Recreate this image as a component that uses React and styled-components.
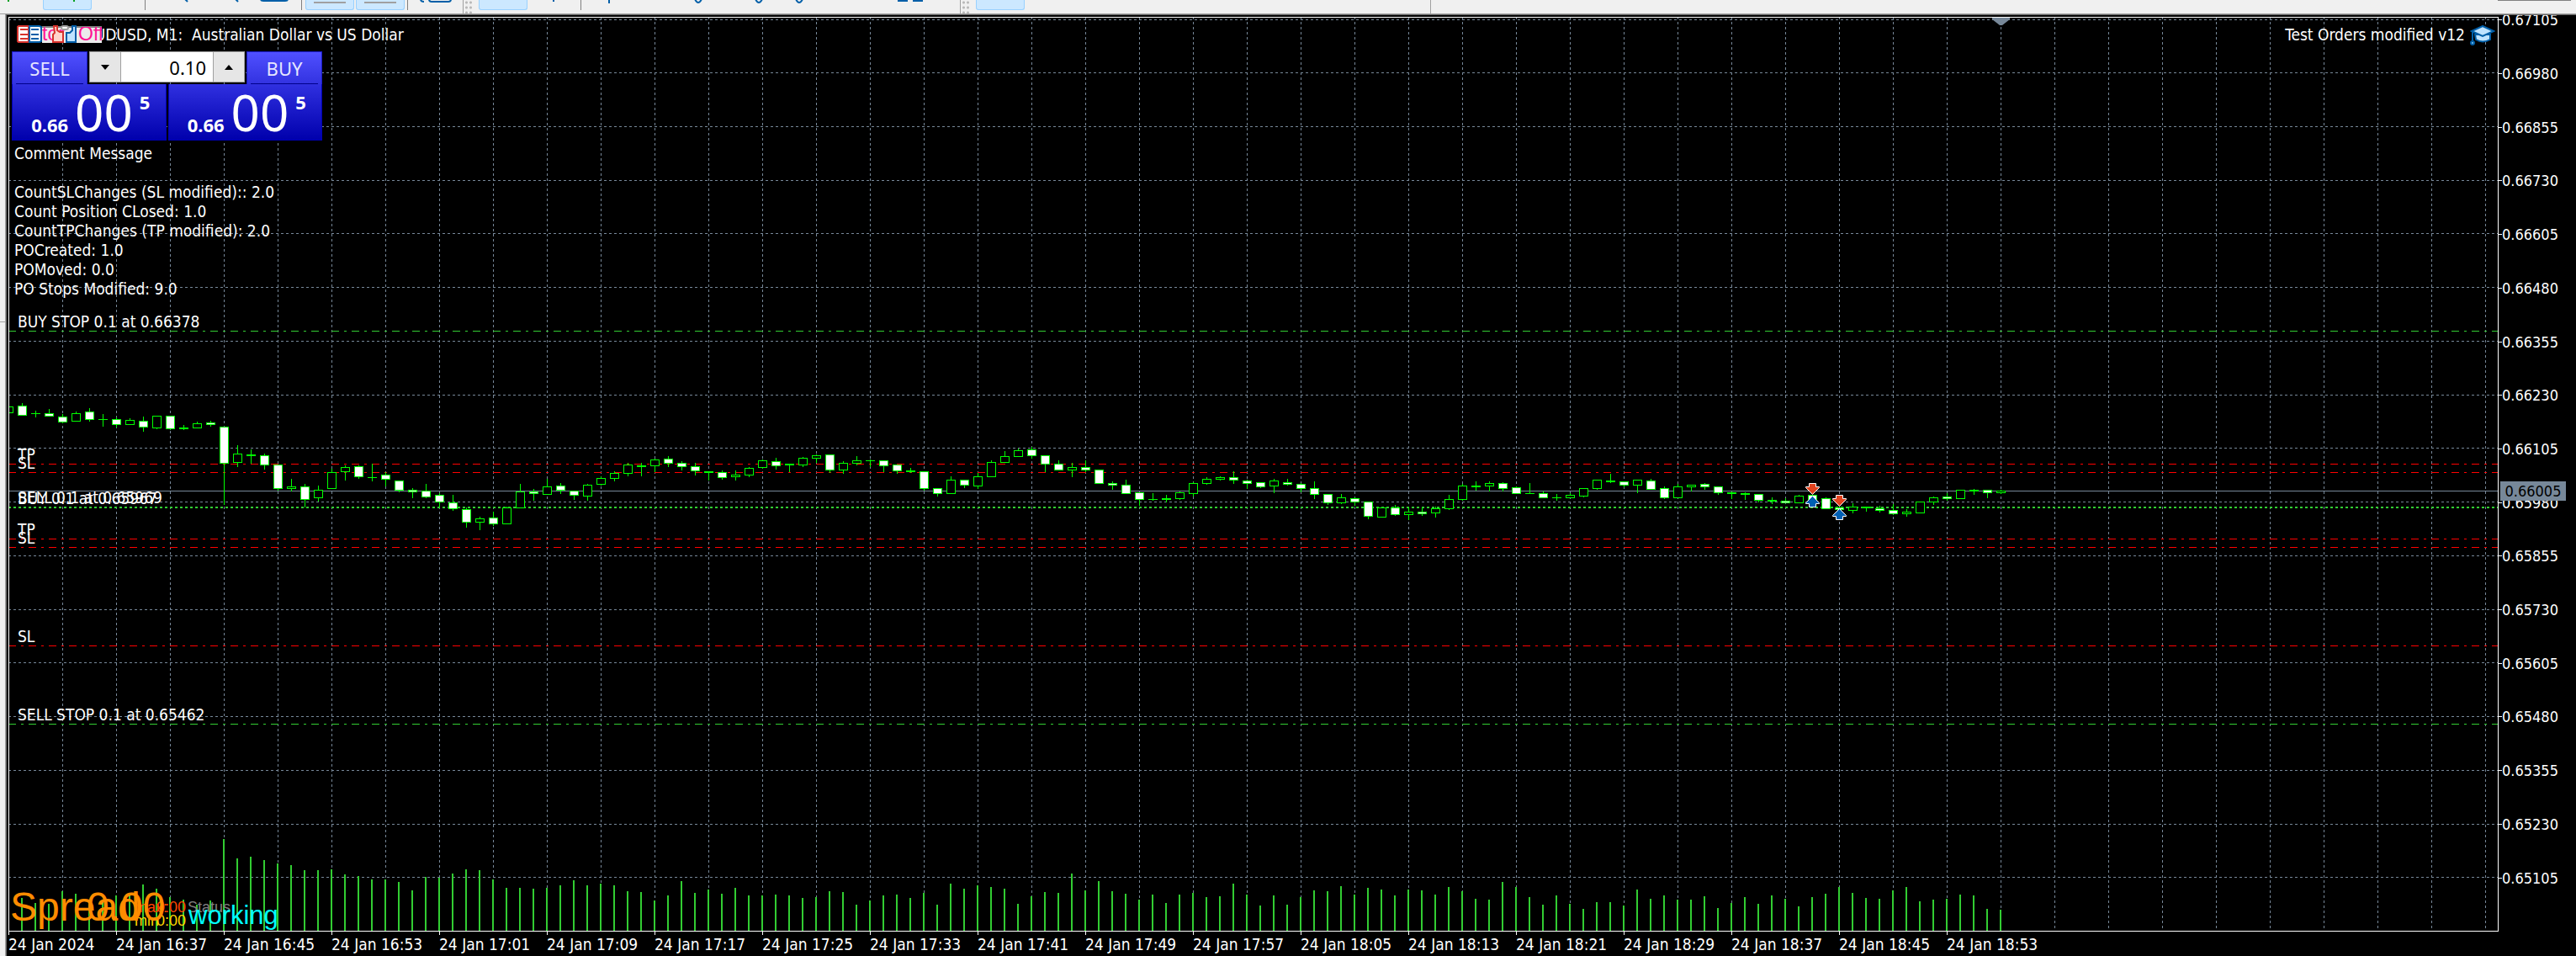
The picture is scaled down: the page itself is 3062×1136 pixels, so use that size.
import React from "react";
import styled, { createGlobalStyle } from "styled-components";

const GlobalStyle = createGlobalStyle`
  * {
    box-sizing: border-box;
  }
  body {
    margin: 0;
    background: #000;
    color: #fff;
    font-family: "DejaVu Sans Condensed", "DejaVu Sans", sans-serif;
    font-size: 19px;
  }
`;

const Window = styled.div`
  display: flex;
  flex-direction: column;
  min-height: 100vh;
  overflow: hidden;
`;

const Toolbar = styled.div`
  display: flex;
  gap: 2px;
  height: 16px;
  padding-right: 6px;
  background: #f0f0f0;
  overflow: hidden;
`;

const ToolButton = styled.button`
  flex: none;
  width: 58px;
  height: 12px;
  padding: 0;
  border: 1px solid ${(props) => (props.$active ? "#99d1ff" : "transparent")};
  border-top: 0;
  border-radius: 0 0 3px 3px;
  background: ${(props) => (props.$active ? "#cce8ff" : "transparent")};
  line-height: 0;

  &:first-child {
    margin-left: -9px;
  }
`;

const Separator = styled.span`
  flex: none;
  width: 4px;
  height: 12px;
  background: linear-gradient(#808080, #808080) 1px 0 / 1px 100% no-repeat;
`;

const Grip = styled.span`
  flex: none;
  width: 18px;
  margin-left: ${(props) => props.$space || 0}px;
  background:
    linear-gradient(#a0a0a0, #a0a0a0) 1px 0 / 1px 100% no-repeat,
    radial-gradient(circle, #b8b8b8 1px, transparent 2px) 3px 0 / 5px 6px
      repeat-y,
    radial-gradient(circle, #b8b8b8 1px, transparent 2px) 8px 0 / 5px 6px
      repeat-y;
`;

const Edge = styled.span`
  width: 1px;
  margin-left: 480px;
  background: #a0a0a0;
`;

const BarEnd = styled.span`
  width: 87px;
  height: 1px;
  margin-left: auto;
  background: #808080;
`;

const Body = styled.div`
  display: flex;
  flex: 1;
`;

const Dock = styled.aside`
  flex: none;
  width: 6px;
  border-top: 1px solid #a0a0a0;
  background: linear-gradient(#a0a0a0, #a0a0a0) 0 365px / 100% 1px no-repeat
    #f0f0f0;
`;

const ChartWindow = styled.main`
  display: flex;
  flex: 1;
  min-width: 0;
  border-top: 1px solid #a0a0a0;
  border-left: 1px solid #a0a0a0;
`;

const ChartInner = styled.div`
  display: flex;
  flex: 1;
  min-width: 0;
  border-top: 1px solid #696969;
  border-left: 1px solid #696969;
  background: #000;
`;

const ChartColumn = styled.div`
  display: flex;
  flex: 1;
  flex-direction: column;
  min-width: 0;
  padding: 2px 0 0 2px;
`;

const Plot = styled.div`
  display: grid;
  flex: 1;
  min-height: 0;
  border: 1px solid #fff;
  overflow: hidden;

  & > * {
    grid-area: 1 / 1;
  }
`;

const Canvas = styled.svg`
  width: 100%;
  height: 100%;
  min-height: 1085px;
`;

const Overlay = styled.div`
  z-index: 1;
  padding: 9px 3px 0;
`;

const Header = styled.header`
  display: flex;
  justify-content: space-between;
  height: 24px;
  margin-bottom: 7px;
  line-height: 23px;
`;

const HeaderSide = styled.div`
  display: flex;
  align-items: flex-start;
  gap: ${(props) => props.$gap || 0}px;
  padding-left: 6px;
  white-space: pre;
`;

const HeaderIcons = styled.svg`
  z-index: 1;
  margin-right: -20px;
`;

const TradePanel = styled.section`
  display: grid;
  grid-template-columns: 90px 1fr 90px;
  width: 369px;
  row-gap: 0;
`;

const SideButton = styled.button`
  height: 39px;
  padding: 0 4px;
  border: 1px solid #1a1ac8;
  border-bottom: 0;
  background: linear-gradient(#5050ff, #3232e0);
  color: #e6e6ff;
  font-family: "Noto Sans", sans-serif;
  font-size: 22px;
  line-height: 36px;

  span {
    display: block;
    border-bottom: 1px solid #00008b;
    box-shadow: 0 1px #8080ff;
  }
`;

const Volume = styled.div`
  display: grid;
  grid-template-columns: 36px 1fr 36px;
  height: 37px;
  margin: 0 2px;
  border: 1px solid #a0a0a0;
  background: #a0a0a0;
  column-gap: 1px;
`;

const Step = styled.button`
  padding: 0;
  border: 0;
  background: #e6e6e6;
  line-height: 0;
`;

const VolumeInput = styled.input`
  min-width: 0;
  padding: 0 8px;
  border: 0;
  background: #fff;
  color: #000;
  font-family: "Noto Sans", sans-serif;
  font-size: 22px;
  text-align: right;
`;

const Quotes = styled.div`
  display: grid;
  grid-column: 1 / -1;
  grid-template-columns: 1fr 1fr;
  column-gap: 2px;
`;

const Quote = styled.button`
  display: flex;
  justify-content: center;
  gap: 8px;
  height: 67px;
  padding: 0 0 0 4px;
  border: 1px solid #0000b4;
  border-top: 0;
  background: linear-gradient(#3030e0, #0000ac);
  color: #fff;
  font-family: "Noto Sans", sans-serif;
  font-size: 22px;
  font-weight: 700;
  line-height: 30px;
`;

const Whole = styled.span`
  align-self: flex-end;
  padding-bottom: 3px;
`;

const Pips = styled.span`
  font-size: 60px;
  font-weight: 400;
  line-height: 67px;
`;

const Fraction = styled.span`
  padding-top: 6px;
`;

const Comment = styled.div`
  padding: 4px 3px;
  line-height: 23px;
  white-space: pre-line;
`;

const TimeAxis = styled.ul`
  display: flex;
  height: 29px;
  margin: 0;
  padding: 0;
  list-style: none;
`;

const TimeLabel = styled.li`
  flex: none;
  width: 128px;
  line-height: 30px;
  white-space: nowrap;
  background: linear-gradient(#fff, #fff) 0 0 / 1px 4px no-repeat;
`;

const PriceAxis = styled.div`
  position: relative;
  display: flex;
  flex: none;
  width: 92px;
  overflow: hidden;
  font-size: 18px;
`;

const PriceList = styled.ul`
  display: flex;
  flex: 1;
  flex-direction: column;
  margin: -26px 0 61px;
  padding: 0;
  list-style: none;
`;

const PriceLabel = styled.li`
  display: flex;
  flex: 1;
  align-items: center;

  &::before {
    content: "";
    width: 4px;
    height: 1px;
    background: #fff;
  }
`;

const PriceTag = styled.output`
  position: absolute;
  top: 554px;
  left: 2px;
  width: 78px;
  background: #778899;
  color: #000;
  line-height: 23px;
  text-align: center;
`;

const FIRST_X = 10;
const STEP = 16;
const BASE_Y = 480;
const BOTTOM = 1106;

// high, body top, body bottom, low (px below BASE_Y), 1 = bearish
const CANDLES = [
  [3, 3, 11, 11, 0], [-1, 2, 14, 14, 1], [8, 11, 12, 16, 0], [6, 11, 15, 15, 1],
  [12, 15, 22, 23, 1], [9, 11, 21, 21, 0], [5, 9, 19, 21, 1], [12, 18, 19, 27, 0],
  [16, 18, 25, 28, 1], [17, 19, 25, 25, 0], [15, 20, 28, 33, 1], [14, 14, 29, 30, 0],
  [14, 14, 30, 31, 1], [25, 28, 30, 31, 0], [21, 23, 29, 29, 0], [20, 22, 25, 27, 1],
  [27, 27, 71, 120, 1], [49, 59, 70, 75, 0], [54, 60, 62, 71, 0], [59, 61, 73, 78, 1],
  [72, 72, 101, 103, 1], [89, 98, 101, 104, 0], [95, 98, 114, 123, 1], [97, 102, 112, 116, 0],
  [77, 81, 101, 101, 0], [73, 75, 81, 91, 0], [73, 74, 87, 89, 1], [71, 87, 88, 92, 0],
  [81, 84, 90, 98, 1], [91, 91, 103, 105, 1], [100, 102, 105, 112, 1], [95, 103, 111, 112, 1],
  [106, 108, 117, 123, 1], [108, 117, 125, 127, 1], [123, 125, 141, 147, 1], [134, 136, 141, 150, 0],
  [128, 135, 143, 145, 1], [122, 123, 143, 143, 0], [95, 104, 124, 124, 0], [101, 104, 107, 115, 1],
  [89, 98, 108, 108, 0], [94, 97, 103, 107, 1], [103, 103, 109, 114, 1], [95, 96, 110, 115, 0],
  [86, 88, 96, 97, 0], [80, 82, 89, 92, 0], [70, 72, 83, 86, 0], [70, 73, 75, 86, 0],
  [65, 66, 74, 81, 0], [62, 65, 71, 75, 1], [68, 70, 75, 79, 1], [70, 74, 80, 85, 1],
  [80, 80, 82, 91, 0], [79, 81, 88, 90, 1], [79, 84, 87, 91, 0], [75, 76, 85, 87, 0],
  [66, 67, 76, 77, 0], [64, 68, 74, 78, 1], [71, 71, 73, 81, 0], [63, 64, 73, 75, 0],
  [60, 61, 65, 70, 0], [60, 60, 79, 82, 1], [68, 70, 79, 83, 0], [62, 67, 71, 73, 0],
  [66, 67, 68, 75, 0], [67, 67, 74, 81, 1], [72, 72, 80, 83, 1], [76, 79, 81, 82, 0],
  [80, 80, 101, 103, 1], [100, 100, 107, 110, 1], [86, 90, 107, 107, 0], [90, 90, 97, 100, 1],
  [82, 86, 98, 101, 0], [67, 69, 87, 87, 0], [56, 62, 70, 70, 0], [53, 55, 63, 63, 0],
  [51, 54, 62, 65, 1], [61, 61, 72, 81, 1], [67, 71, 79, 79, 1], [70, 75, 79, 87, 0],
  [67, 75, 79, 81, 1], [78, 78, 95, 95, 1], [92, 94, 97, 102, 1], [90, 96, 107, 107, 1],
  [105, 105, 114, 121, 1], [106, 113, 114, 115, 0], [108, 112, 114, 117, 0], [104, 105, 113, 114, 0],
  [93, 94, 107, 110, 0], [87, 89, 95, 96, 0], [86, 87, 90, 91, 0], [80, 87, 91, 95, 1],
  [90, 91, 95, 101, 1], [93, 93, 99, 100, 1], [89, 91, 98, 106, 0], [89, 93, 96, 97, 1],
  [94, 95, 101, 105, 1], [92, 100, 108, 113, 1], [107, 107, 118, 120, 1], [107, 111, 118, 119, 0],
  [111, 112, 117, 121, 1], [116, 116, 134, 137, 1], [123, 123, 135, 135, 0], [120, 123, 132, 133, 1],
  [123, 128, 132, 138, 0], [123, 128, 131, 133, 1], [122, 124, 130, 135, 0], [108, 113, 125, 126, 0],
  [95, 97, 114, 115, 0], [92, 97, 99, 103, 0], [92, 94, 98, 104, 0], [93, 94, 101, 104, 1],
  [98, 99, 107, 107, 1], [94, 106, 107, 107, 0], [104, 106, 112, 112, 1], [107, 111, 112, 115, 0],
  [106, 108, 112, 112, 0], [100, 100, 110, 111, 0], [90, 90, 101, 102, 0], [83, 91, 93, 94, 0],
  [92, 92, 97, 99, 1], [90, 90, 97, 106, 0], [89, 91, 102, 102, 1], [98, 100, 112, 113, 1],
  [95, 98, 112, 112, 0], [96, 96, 99, 104, 0], [94, 95, 99, 102, 1], [98, 98, 106, 108, 1],
  [104, 105, 107, 113, 0], [105, 106, 108, 114, 0], [107, 107, 115, 117, 1], [111, 114, 116, 119, 0],
  [112, 115, 118, 118, 1], [108, 109, 118, 118, 0], [108, 108, 115, 115, 1], [111, 112, 125, 125, 1],
  [122, 123, 126, 126, 1], [118, 122, 127, 130, 0], [122, 122, 124, 128, 0], [121, 124, 127, 129, 1],
  [119, 126, 131, 132, 1], [125, 128, 131, 134, 0], [116, 116, 130, 130, 0], [110, 111, 117, 120, 0],
  [106, 110, 113, 115, 1], [102, 102, 113, 113, 0], [101, 102, 104, 108, 0], [102, 102, 106, 112, 1],
  [102, 103, 106, 107, 0],
];

const VOLUMES = [
  0, 39, 33, 32, 47, 44, 36, 36, 42, 43, 55, 50, 40, 37, 31, 36, 109, 86, 88, 84,
  80, 78, 72, 72, 73, 67, 65, 61, 61, 58, 48, 64, 63, 68, 73, 72, 61, 51, 51, 50,
  51, 54, 60, 54, 56, 54, 47, 46, 36, 42, 59, 45, 49, 44, 51, 42, 42, 43, 42, 39,
  40, 47, 46, 31, 36, 42, 43, 39, 45, 31, 56, 50, 54, 52, 50, 32, 41, 46, 45, 68,
  48, 59, 47, 44, 37, 43, 33, 43, 45, 40, 41, 56, 43, 30, 42, 31, 40, 48, 47, 53,
  43, 51, 49, 42, 49, 48, 43, 52, 47, 38, 37, 58, 52, 40, 31, 42, 32, 26, 34, 34,
  30, 49, 38, 42, 37, 37, 41, 27, 33, 40, 32, 42, 38, 29, 40, 44, 52, 45, 39, 38,
  48, 52, 35, 37, 38, 43, 42, 26, 25,
];

const GRID_Y = [
  23, 86, 150, 214, 277, 341, 405, 469, 532, 596, 660, 724, 787, 851, 915, 979,
  1042,
];
const GRID_X = Array.from({ length: 46 }, (_, i) => 74 + i * 64);

const PRICES = GRID_Y.map((_, i) => (0.67105 - i * 0.00125).toFixed(5));

const TIMES = [
  "24 Jan 2024", "24 Jan 16:37", "24 Jan 16:45", "24 Jan 16:53", "24 Jan 17:01",
  "24 Jan 17:09", "24 Jan 17:17", "24 Jan 17:25", "24 Jan 17:33", "24 Jan 17:41",
  "24 Jan 17:49", "24 Jan 17:57", "24 Jan 18:05", "24 Jan 18:13", "24 Jan 18:21",
  "24 Jan 18:29", "24 Jan 18:37", "24 Jan 18:45", "24 Jan 18:53",
];

const ORDERS = [
  { y: 393, color: "#32cd32", label: "BUY STOP 0.1 at 0.66378" },
  { y: 551, color: "#ff0000", label: "TP" },
  { y: 561, color: "#ff0000", label: "SL" },
  { y: 602, color: "#32cd32", label: "SELL 0.1 at 0.65969", dash: "3 3" },
  { y: 603, color: "#32cd32", label: "BUY 0.1 at 0.65967", dash: "3 3" },
  { y: 640, color: "#ff0000", label: "TP" },
  { y: 650, color: "#ff0000", label: "SL" },
  { y: 767, color: "#ff0000", label: "SL" },
  { y: 860, color: "#32cd32", label: "SELL STOP 0.1 at 0.65462" },
];

const DEALS = [
  { x: 2146, y: 574, side: "sell" },
  { x: 2146, y: 589, side: "buy" },
  { x: 2178, y: 588, side: "sell" },
  { x: 2178, y: 604, side: "buy" },
];

const COMMENT = `Comment Message

CountSLChanges (SL modified):: 2.0
Count Position CLosed: 1.0
CountTPChanges (TP modified): 2.0
POCreated: 1.0
POMoved: 0.0
PO Stops Modified: 9.0`;

function Candle({ index, data }) {
  const [high, top, bottom, low, bearish] = data;
  const x = FIRST_X + index * STEP;
  const height = bottom - top;
  return (
    <>
      <rect x={x} y={BASE_Y + high} width="1" height={low - high} fill="#0f0" />
      <rect x={x - 5} y={BASE_Y + top} width="11" height={height} fill="#0f0" />
      {height > 2 && (
        <rect
          x={x - 4}
          y={BASE_Y + top + 1}
          width="9"
          height={height - 2}
          fill={bearish ? "#fff" : "#000"}
        />
      )}
    </>
  );
}

function Deal({ x, y, side }) {
  return side === "sell" ? (
    <path
      transform={`translate(${x} ${y})`}
      d="M4.5 .5h8v4h4v1l-8 8-8-8v-1h4z"
      fill="#e2431e"
      stroke="#fff"
    />
  ) : (
    <path
      transform={`translate(${x} ${y})`}
      d="M4.5 13.5h8v-4h4v-1l-8-8-8 8v1h4z"
      fill="#0060b4"
      stroke="#fff"
    />
  );
}

function Chart() {
  return (
    <Canvas role="img" aria-label="AUDUSD M1 candlestick chart">
      <g transform="translate(-11 -21)">
        <g
          transform="translate(0.5 0.5)"
          stroke="#778899"
          shapeRendering="crispEdges"
        >
          {GRID_X.map((x) => (
            <path key={x} d={`M${x} 19.5V1106`} strokeDasharray="3 3" />
          ))}
          {GRID_Y.map((y) => (
            <path key={y} d={`M9.5 ${y}H6000`} strokeDasharray="3 3" />
          ))}
          <path d="M10 583H6000" />
          {ORDERS.map((order) => (
            <path
              key={order.y}
              d={`M9.5 ${order.y}H6000`}
              stroke={order.color}
              strokeDasharray={order.dash || "9 6 3 6"}
            />
          ))}
        </g>
        <path d="M2368 21h21v2l-9 7h-3l-9-7z" fill="#778899" />
        <g shapeRendering="crispEdges">
          {VOLUMES.map((v, i) => (
            <rect
              key={i}
              x={FIRST_X - 1 + i * STEP}
              y={BOTTOM - v}
              width="2"
              height={v}
              fill="#32cd32"
            />
          ))}
          {CANDLES.map((data, i) => (
            <Candle key={i} index={i} data={data} />
          ))}
        </g>
        {DEALS.map((deal) => (
          <Deal key={`${deal.x}-${deal.y}`} {...deal} />
        ))}
        <g fill="#fff">
          {ORDERS.map((order) => (
            <text key={order.y} x="21" y={order.y - 4}>
              {order.label}
            </text>
          ))}
        </g>
        <g fontFamily="Liberation Sans, sans-serif" fontSize="18">
          <text x="223" y="1084" fill="#808080">Status</text>
          <text x="160" y="1084" fill="#ff4500">max:</text>
          <text x="186" y="1084" fill="#ff4500">0:00</text>
          <text x="160" y="1100" fill="#ffd700">min</text>
          <text x="186" y="1100" fill="#ffd700">0:00</text>
          <text x="224" y="1098" fill="#00ffff" fontSize="31">working</text>
          <g fill="#ff8c00" fontSize="48">
            <text x="12" y="1094">Spread</text>
            <text x="103" y="1094">0.00</text>
          </g>
        </g>
      </g>
    </Canvas>
  );
}

function TitleIcons() {
  return (
    <HeaderIcons width="101" height="22" aria-hidden="true">
      <path d="M30 1h71v20H30z" fill="#ececec" />
      <path d="M30 2h71" stroke="#808080" strokeWidth="2" />
      <svg x="30" y="2" width="71" height="17">
        <g
          fill="#ff1493"
          fontFamily="Liberation Sans, sans-serif"
          fontSize="23"
        >
          <text x="0" y="16">tor</text>
          <text x="43" y="16">Off</text>
        </g>
      </svg>
      <path d="M2 1h12v19H2l-1-1V2z" fill="#fff" stroke="#d8322c" strokeWidth="2" />
      <path d="M15 1h12l2 1v17l-2 1H15z" fill="#fff" stroke="#005fa8" strokeWidth="2" />
      <path d="M4 5h9M4 11h9M4 16h9" stroke="#d8322c" strokeWidth="2" />
      <path d="M17 5h9M17 11h9M17 16h9" stroke="#005fa8" strokeWidth="2" />
      <path d="M44 1h4v5l3 2h4v12H43v-9l2-2z" fill="#ffd5cc" stroke="#d8322c" strokeWidth="2" />
      <path d="M66 1h4v19H59v-11h4l3-3z" fill="#bfe3ff" stroke="#005fa8" strokeWidth="2" />
      <rect x="53" y="1" width="8" height="4" rx="2" fill="#fff" stroke="#a0a0a0" strokeWidth="2" />
    </HeaderIcons>
  );
}

function CapIcon() {
  return (
    <svg width="30" height="24" aria-hidden="true">
      <path d="M6 11h18v6q-9 5-17 0z" fill="#bfe3ff" stroke="#005fa8" strokeWidth="2" />
      <path d="M15 1l13 6-13 6L2 7z" fill="#bfe3ff" stroke="#005fa8" strokeWidth="2" />
      <path d="M3 7v11" stroke="#005fa8" strokeWidth="2" />
      <circle cx="3" cy="21" r="2" fill="#7cc4f5" stroke="#005fa8" strokeWidth="2" />
    </svg>
  );
}

function ToolIcon({ d, color = "#005fa8", fill = "none" }) {
  return (
    <svg width="56" height="11" aria-hidden="true">
      <path d={d} stroke={color} strokeWidth="2" fill={fill} />
    </svg>
  );
}

function Tool({ name, active, ...icon }) {
  return (
    <ToolButton type="button" aria-label={name} $active={active}>
      {icon.d && <ToolIcon {...icon} />}
    </ToolButton>
  );
}

function TopBar() {
  return (
    <Toolbar>
      <Tool name="Bar chart" d="M18 0v2" color="#00a020" />
      <Tool name="Candles" active d="M36 0v2" color="#00a020" />
      <Tool name="Line chart" />
      <Separator />
      <Tool name="Zoom in" d="M42 -1l3 3" />
      <Tool name="Zoom out" d="M42 -1l3 3" />
      <Tool name="Tile windows" d="M12 -1q0 2 3 2h26q3 0 3-2z" fill="#005fa8" />
      <Separator />
      <Tool name="Auto scroll" active d="M9 3h38" color="#a0a0a0" />
      <Tool name="Chart shift" active d="M9 3h38" color="#a0a0a0" />
      <Separator />
      <Tool name="Templates" d="M10 -1q0 3 4 3M20 -1q0 3 3 3h20q3 0 3-3" />
      <Grip />
      <Tool name="Cursor" active />
      <Tool name="Crosshair" d="M28 0v2" />
      <Separator />
      <Tool name="Vertical line" d="M28 0v4" />
      <Tool name="Horizontal line" />
      <Tool name="Trendline" d="M10 -1q4 8 8 0" />
      <Tool name="Channel" d="M22 -1q4 8 8 0" />
      <Tool name="Fibonacci" d="M10 -1q4 8 8 0" />
      <Tool name="Text" />
      <Tool name="Shapes" d="M12 0v1h10v-1M30 0v1h10v-1" fill="#005fa8" />
      <Grip $space={25} />
      <Tool name="M1" active />
      <Edge />
      <BarEnd />
    </Toolbar>
  );
}

function Price({ label }) {
  return (
    <Quote type="button" aria-label={label}>
      <Whole>0.66</Whole>
      <Pips>00</Pips>
      <Fraction>5</Fraction>
    </Quote>
  );
}

function OneClickTrading() {
  return (
    <TradePanel>
      <SideButton type="button">
        <span>SELL</span>
      </SideButton>
      <Volume>
        <Step type="button" aria-label="Decrease volume">
          <svg width="10" height="6">
            <path d="M0 0h10L5 6z" />
          </svg>
        </Step>
        <VolumeInput aria-label="Volume" defaultValue="0.10" />
        <Step type="button" aria-label="Increase volume">
          <svg width="10" height="6">
            <path d="M0 6h10L5 0z" />
          </svg>
        </Step>
      </Volume>
      <SideButton type="button">
        <span>BUY</span>
      </SideButton>
      <Quotes>
        <Price label="Sell at 0.66005" />
        <Price label="Buy at 0.66005" />
      </Quotes>
    </TradePanel>
  );
}

function App() {
  return (
    <Window>
      <GlobalStyle />
      <TopBar />
      <Body>
        <Dock />
        <ChartWindow>
          <ChartInner>
            <ChartColumn>
              <Plot>
                <Chart />
                <Overlay>
                  <Header>
                    <HeaderSide>
                      <TitleIcons />
                      <span>AUDUSD, M1:  Australian Dollar vs US Dollar</span>
                    </HeaderSide>
                    <HeaderSide $gap={6}>
                      <span>Test Orders modified v12</span>
                      <CapIcon />
                    </HeaderSide>
                  </Header>
                  <OneClickTrading />
                  <Comment>{COMMENT}</Comment>
                </Overlay>
              </Plot>
              <TimeAxis>
                {TIMES.map((time) => (
                  <TimeLabel key={time}>{time}</TimeLabel>
                ))}
              </TimeAxis>
            </ChartColumn>
            <PriceAxis>
              <PriceList>
                {PRICES.map((price) => (
                  <PriceLabel key={price}>{price}</PriceLabel>
                ))}
              </PriceList>
              <PriceTag>0.66005</PriceTag>
            </PriceAxis>
          </ChartInner>
        </ChartWindow>
      </Body>
    </Window>
  );
}

export default App;
